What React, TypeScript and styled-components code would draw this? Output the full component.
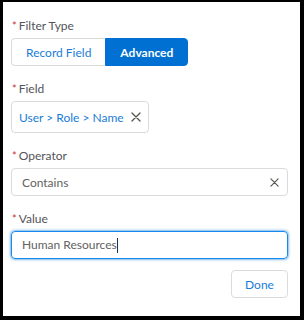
import React from 'react';
import styled, { createGlobalStyle } from 'styled-components';

const GlobalStyle = createGlobalStyle`
  html, body {
    margin: 0;
    padding: 0;
    background: #ffffff;
  }
  * {
    box-sizing: border-box;
  }
`;

const Frame = styled.div`
  width: 304px;
  height: 320px;
  border-style: solid;
  border-color: #000000;
  border-width: 2px 4px 4px 3px;
  background: #ffffff;
  padding: 15px 12px 0 8px;
  font-family: Lato, 'Open Sans', sans-serif;
  color: #3e3e3c;
  display: flex;
  flex-direction: column;
  gap: 14px;
`;

const FormGroup = styled.div`
  display: flex;
  flex-direction: column;
  align-items: flex-start;
  gap: 3px;
`;

const Label = styled.label`
  font-size: 12px;
  line-height: 18px;
  color: #54545a;
  padding-left: 1px;
`;

const Required = styled.abbr`
  color: #c23934;
  text-decoration: none;
  margin-right: 2px;
  font-size: 11px;
`;

const ButtonGroup = styled.div`
  display: flex;
  height: 28px;
`;

const SegmentButton = styled.button<{ $active?: boolean }>`
  font-family: inherit;
  font-size: 12px;
  font-weight: ${(p) => (p.$active ? 700 : 400)};
  height: 28px;
  padding: 0 14px;
  border: 1px solid ${(p) => (p.$active ? '#0070d2' : '#dddbda')};
  background: ${(p) => (p.$active ? '#0070d2' : '#ffffff')};
  color: ${(p) => (p.$active ? '#ffffff' : '#1a7cd8')};
  border-radius: 0;
  &:first-child {
    border-radius: 4px 0 0 4px;
    border-right: none;
  }
  &:last-child {
    border-radius: 0 4px 4px 0;
  }
`;

const Pill = styled.div`
  display: flex;
  align-items: center;
  gap: 7px;
  height: 32px;
  padding: 0 7px 0 7px;
  border: 1px solid #dddbda;
  border-radius: 4px;
  font-size: 12px;
  color: #1a7cd8;
`;

const Input = styled.div<{ $focused?: boolean }>`
  align-self: stretch;
  display: flex;
  align-items: center;
  height: 28px;
  padding: 0 8px 0 10px;
  border: 1px solid ${(p) => (p.$focused ? '#1589ee' : '#dddbda')};
  box-shadow: ${(p) => (p.$focused ? '0 0 3px #0070d2' : 'none')};
  border-radius: 4px;
  font-size: 12px;
  color: #626262;
`;

const InputText = styled.span`
  flex: 1;
`;

const Caret = styled.span`
  display: inline-block;
  width: 1px;
  height: 15px;
  background: #16325c;
  vertical-align: middle;
`;

const Footer = styled.div`
  display: flex;
  justify-content: flex-end;
  margin-top: -3px;
`;

const DoneButton = styled.button`
  font-family: inherit;
  font-size: 12px;
  height: 28px;
  width: 57px;
  border: 1px solid #dddbda;
  border-radius: 4px;
  background: #ffffff;
  color: #1a7cd8;
`;

const CloseIcon: React.FC<{ size?: number }> = ({ size = 9 }) => (
  <svg width={size} height={size} viewBox="0 0 10 10">
    <path d="M1 1 L9 9 M9 1 L1 9" stroke="#57554f" strokeWidth="1.3" strokeLinecap="round" />
  </svg>
);

export default function App() {
  return (
    <>
      <GlobalStyle />
      <Frame>
        <FormGroup>
          <Label>
            <Required>*</Required>Filter Type
          </Label>
          <ButtonGroup>
            <SegmentButton>Record Field</SegmentButton>
            <SegmentButton $active>Advanced</SegmentButton>
          </ButtonGroup>
        </FormGroup>

        <FormGroup>
          <Label>
            <Required>*</Required>Field
          </Label>
          <Pill>
            User &gt; Role &gt; Name
            <CloseIcon size={10} />
          </Pill>
        </FormGroup>

        <FormGroup>
          <Label>
            <Required>*</Required>Operator
          </Label>
          <Input>
            <InputText>Contains</InputText>
            <CloseIcon />
          </Input>
        </FormGroup>

        <FormGroup>
          <Label>
            <Required>*</Required>Value
          </Label>
          <Input $focused>
            <InputText>
              Human Resources<Caret />
            </InputText>
          </Input>
        </FormGroup>

        <Footer>
          <DoneButton>Done</DoneButton>
        </Footer>
      </Frame>
    </>
  );
}
